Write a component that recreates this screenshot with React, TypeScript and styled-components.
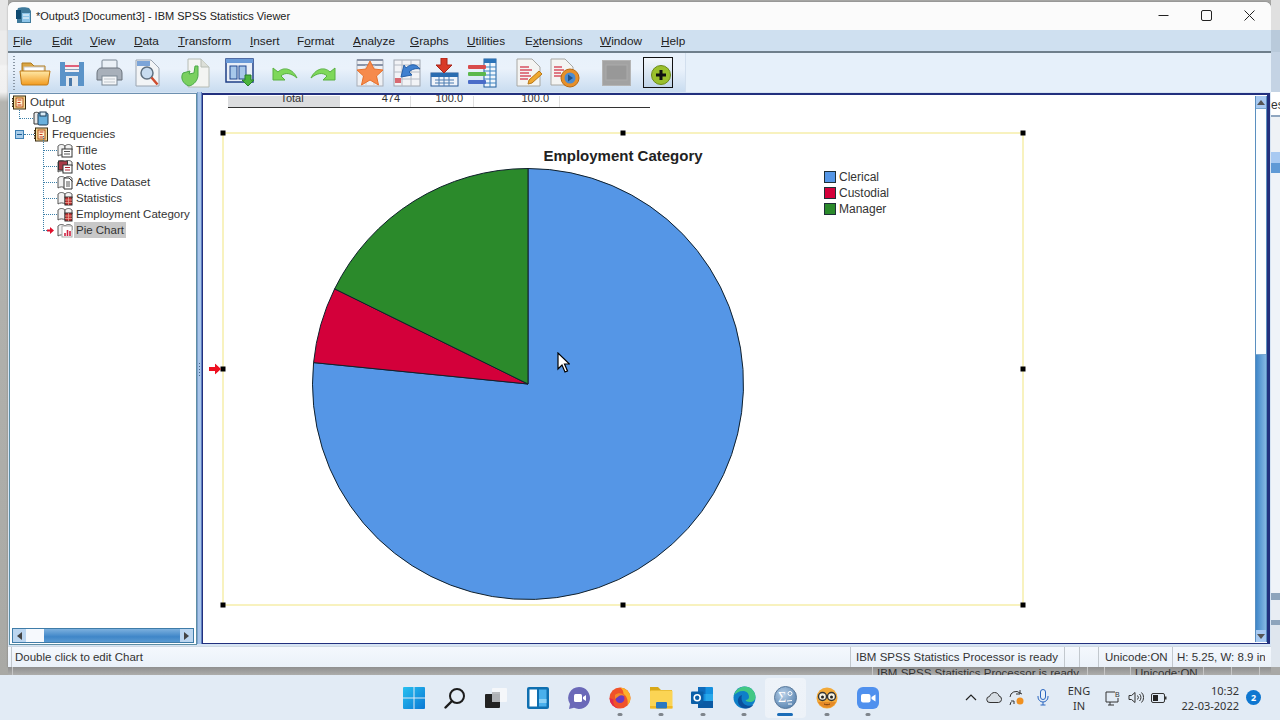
import React from "react";
import styled, { createGlobalStyle } from "styled-components";

const Global = createGlobalStyle`
  html, body { margin: 0; padding: 0; width: 1280px; height: 720px; overflow: hidden; background: #e3ebf4; }
  * { box-sizing: border-box; }
  u { text-decoration-thickness: 1px; text-underline-offset: 1px; }
`;

const Page = styled.div`
  width: 1280px; height: 720px; display: flex; flex-direction: column; overflow: hidden;
  font-family: "Liberation Sans", Arial, sans-serif; font-size: 12px; color: #222;
`;
const Desktop = styled.div`display: flex; height: 675px; flex: none;`;
const LeftEdge = styled.div`
  width: 8px; flex: none;
  background: linear-gradient(180deg, #e6e6e6 0, #e6e6e6 30px, #ececec 31px, #ececec 64px, #f3f3f3 66px, #f0f0f0 92px, #b4b4b0 102px, #a9a9a5 100%);
`;
const RightEdge = styled.div`width: 9px; flex: none; display: flex; flex-direction: column; background: #b9bcc0; overflow: hidden;`;
const EdgeBand = styled.div<{ $h: number; $bg: string }>`height: ${p => p.$h}px; flex: none; background: ${p => p.$bg}; font-size: 12px; line-height: 26px; color: #333; overflow: hidden;`;
const Center = styled.div`flex: 1; display: flex; flex-direction: column; min-width: 0; background: #a8a8a6;`;
const Window = styled.div`
  margin-top: 2px; height: 665px; flex: none; display: flex; flex-direction: column;
  background: #f4f8fc; border-radius: 6px 6px 0 0; overflow: hidden; box-shadow: 0 0 2px rgba(0,0,0,.35);
`;
const TitleBar = styled.div`height: 28px; flex: none; display: flex; align-items: center; padding: 0 0 1px 7px; background: #fbfbfb;`;
const TitleText = styled.span`margin-left: 4px; flex: 1; font-size: 11px; color: #222; white-space: nowrap;`;
const WinBtn = styled.div`width: 43px; height: 26px; display: flex; align-items: center; justify-content: center; color: #222; flex: none;`;

const MenuBar = styled.div`height: 21px; flex: none; display: flex; align-items: center; padding-left: 4px; background: #cfe0f0;`;
const MenuItem = styled.span`margin-left: 1px; color: #222; font-size: 11.8px; white-space: nowrap;`;
const MenuCell = styled.div<{ $w: number }>`width: ${p => p.$w}px; flex: none;`;
const Divider = styled.div`height: 2px; flex: none; background: #6f7f8b;`;
const Toolbar = styled.div`height: 39px; flex: none; display: flex; align-items: center; background: linear-gradient(180deg, #e8f1fb, #eaf2fb 40%, #c9dcf0);`;
const Grip = styled.div`width: 2px; height: 34px; margin-left: 5px; flex: none; background: repeating-linear-gradient(180deg, #8b98a6 0 1px, transparent 1px 3px);`;
const ToolGroup = styled.div<{ $ml: number }>`display: flex; margin-left: ${p => p.$ml}px; flex: none;`;
const ToolCell = styled.div<{ $w?: number }>`width: ${p => p.$w ?? 37.6}px; height: 32px; display: flex; align-items: center; justify-content: center; flex: none;`;
const ToolTail = styled.div`margin-left: 7px; flex: 1; align-self: stretch; background: #e6f0fa; border-left: 1px solid #d2dfee;`;

const Main = styled.div`flex: 1; display: flex; min-height: 0; background: #d6e4f3;`;
const TreePanel = styled.div`
  width: 188px; margin: 1px 0 1px 1px; flex: none; display: flex; flex-direction: column; background: #fff;
  border: 1px solid #5d8ea4; border-top-color: #6d90b0;
`;
const TreeBody = styled.div`flex: 1; overflow: hidden;`;
const Row = styled.div<{ $pad: number }>`height: 16px; display: flex; align-items: center; padding-left: ${p => p.$pad}px; position: relative;`;
const Label = styled.span<{ $sel?: boolean }>`margin-left: 1px; padding: 0 2px; font-size: 11.5px; line-height: 16px; white-space: nowrap; color: #333; background: ${p => p.$sel ? "#c8c8c8" : "transparent"};`;
const GlyphBox = styled.span`display: flex; flex: none;`;
const RowArrow = styled.span`display: flex; flex: none; margin-right: 3px;`;
const Conn = styled.span<{ $w: number; $up: number }>`
  width: ${p => p.$w}px; height: 0; flex: none; border-top: 1px dotted #3a7fa8; position: relative;
  &::before { content: ""; position: absolute; left: 0; bottom: 0; height: ${p => p.$up}px; border-left: 1px dotted #3a7fa8; }
`;
const Expander = styled.span`
  width: 9px; height: 9px; flex: none; background: #a8cdea; border: 1px solid #3c7fb4; position: relative;
  &::after { content: ""; position: absolute; left: 1px; right: 1px; top: 3px; height: 1px; background: #1c5c94; }
`;
const HScroll = styled.div`
  height: 15px; margin: 0 2px 1px 2px; flex: none; display: flex; align-items: center; border: 1px solid #3f7ca8;
  background: linear-gradient(180deg, #7cb0de, #3f86c8 60%, #5a9ad2);
`;
const ScrollBtn = styled.div`width: 13px; height: 13px; flex: none; display: flex; align-items: center; justify-content: center; background: #bcd6f0;`;
const HThumb = styled.div`width: 18px; height: 13px; flex: none; background: #f6f9fd;`;
const Spacer = styled.div`flex: 1;`;
const Splitter = styled.div`
  width: 5px; flex: none; background: #a9c6ea; margin-bottom: 2px; border-left: 1px solid #7ea0cc; border-right: 1px solid #5f7fc0; position: relative;
  &::after { content: ""; position: absolute; left: 1px; top: 271px; height: 14px; width: 1px; background: repeating-linear-gradient(180deg, #46688c 0 1px, transparent 1px 3px); }
`;
const ContentPane = styled.div`
  flex: 1; min-width: 0; margin: 1px 1px 2px 0; display: flex; background: #fff; border: 2px solid #22307e; border-width: 2px 3px 1px 1px;
`;
const Canvas = styled.div`flex: 1; position: relative; overflow: hidden; padding: 1px 0 0 19px; background: #fff;`;
const TableRow = styled.div`width: 422px; height: 12px; margin-left: 6px; display: grid; grid-template-columns: 112px 71px 63px 86px 90px; border-bottom: 1px solid #333;`;
const TableCell = styled.div<{ $head?: boolean; $end?: boolean }>`
  font-size: 11px; line-height: 5px; height: 11px; color: #333; padding-right: ${p => p.$head ? 0 : 10}px; padding-left: ${p => p.$head ? 17 : 0}px;
  text-align: ${p => p.$head ? "center" : "right"}; background: ${p => p.$head ? "#dcdddf" : "transparent"};
  border-right: 1px solid ${p => p.$head || p.$end ? "transparent" : "#e0e0e0"};
`;
const ChartFrame = styled.div`
  width: 802px; height: 474px; margin-top: 24px; position: relative; border: 2px solid #f8f2bf;
`;
const ChartTitle = styled.div`height: 18px; margin-top: 13px; text-align: center; font-size: 15px; font-weight: 700; line-height: 18px; color: #222;`;
const ChartBody = styled.div`display: flex; margin: 3px 0 0 88px; align-items: flex-start;`;
const Legend = styled.div`margin: 1px 0 0 79px; display: flex; flex-direction: column;`;
const LegendItem = styled.div`height: 16px; display: flex; align-items: center; color: #333; font-size: 12px;`;
const Swatch = styled.span<{ $c: string }>`width: 12px; height: 12px; margin-right: 3px; flex: none; background: ${p => p.$c}; border: 1px solid #1e3038;`;
const Handle = styled.span<{ $x: number; $y: number }>`
  position: absolute; width: 5px; height: 5px; background: #000; left: ${p => p.$x}%; top: ${p => p.$y}%;
  transform: translate(calc(-50% + ${p => p.$x / 50 - 1}px), calc(-50% + ${p => p.$y / 50 - 1}px));
`;
const Marker = styled.span`position: absolute; left: -15px; top: 50%; transform: translateY(-50%); display: flex;`;
const Pointer = styled.span`position: absolute; left: 333px; top: 218px; display: flex;`;
const VScroll = styled.div`width: 12px; flex: none; display: flex; flex-direction: column; margin: 1px 0 1px 0; border: 1px solid #5a8fc0; border-width: 0 1px; background: linear-gradient(90deg, #3f86c8, #86b8e4);`;
const VThumb = styled.div`height: 247px; flex: none; background: #fbfdff; border-top: 1px solid #7aa8d0; border-bottom: 1px solid #7aa8d0;`;
const VBtn = styled.div`height: 12px; flex: none; display: flex; align-items: center; justify-content: center; background: #a8caf2;`;

const StatusBar = styled.div`height: 21px; flex: none; display: flex; align-items: center; padding: 0 6px 0 3px; background: linear-gradient(180deg, #f4f8fd, #eaf1f9); border-top: 1px solid #cfd9e4;`;
const StatusCell = styled.div<{ $w: number; $grow?: boolean; $pl?: number }>`
  height: 20px; font-size: 11.5px; line-height: 20px; padding-left: ${p => p.$pl ?? 3}px; color: #333; white-space: nowrap; overflow: hidden;
  flex: ${p => p.$grow ? "1" : "none"}; width: ${p => p.$w}px; border-left: 1px solid #c2c8ce;
`;
const GhostStatus = styled.div`flex: 1; display: flex; overflow: hidden; background: linear-gradient(180deg, #8f8f8f, #adadab); padding-left: 4px;`;
const GhostCell = styled.div<{ $w: number; $grow?: boolean }>`
  color: #333; font-size: 11.5px; line-height: 11px; padding: 1px 0 0 4px; white-space: nowrap; overflow: hidden; width: ${p => p.$w}px; flex: ${p => p.$grow ? "1" : "none"}; border-left: 1px solid #c7c7c7;
`;

const Taskbar = styled.div`height: 45px; flex: none; position: relative; display: flex; align-items: center; background: #e2ebf5; padding-left: 393px;`;
const TaskCell = styled.div<{ $active?: boolean }>`
  width: 41.3px; height: 40px; flex: none; display: flex; align-items: center; justify-content: center; position: relative; border-radius: 4px;
  background: ${p => p.$active ? "linear-gradient(#eef3f9, #edf2f8)" : "transparent"};
`;
const RunDot = styled.span<{ $active?: boolean }>`
  position: absolute; left: 50%; bottom: 2px; transform: translateX(-50%); height: 3px; border-radius: 2px;
  width: ${p => p.$active ? 16 : 5}px; background: ${p => p.$active ? "#1a6cb8" : "#7f858c"};
`;
const Tray = styled.div`margin-left: auto; display: flex; align-items: center; height: 100%; padding-right: 41px; color: #222;`;
const TrayCell = styled.div<{ $w: number }>`width: ${p => p.$w}px; flex: none; display: flex; align-items: center; justify-content: center;`;
const LangBox = styled.div`width: 44px; flex: none; text-align: center; font-family: "Noto Sans", sans-serif; font-size: 11px; line-height: 15px; color: #333;`;
const Clock = styled.div`width: 64px; margin-left: 4px; flex: none; text-align: right; font-family: "Noto Sans", sans-serif; font-size: 11px; line-height: 15px; color: #333;`;
const Badge = styled.div`position: absolute; right: 19px; top: 15px; width: 15px; height: 15px; border-radius: 50%; background: #0f77d0; color: #fff; font-family: "Noto Sans", sans-serif; font-size: 9px; font-weight: 700; line-height: 15px; text-align: center;`;

/* ---------- tree icons ---------- */
const TreeGlyph: React.FC<{ kind: string }> = ({ kind }) => {
  if (kind === "frame") return (
    <GlyphBox><svg width="15" height="15" viewBox="0 0 15 15"><rect x="1.5" y="1" width="12" height="13" fill="#f3dc9a" stroke="#3a2a10"/><rect x="4" y="3" width="7" height="9" fill="#fff3d0" stroke="#b04a10"/><path d="M5.5 5h4M5.5 7.5h3M5.5 10h4" stroke="#c8301a" strokeWidth="1.2"/><path d="M0.5 3v9" stroke="#3a2a10" strokeDasharray="1.5 1"/></svg></GlyphBox>
  );
  if (kind === "log") return (
    <GlyphBox><svg width="16" height="15" viewBox="0 0 16 15"><path d="M1 2c2-1 3-1 5 0v11H1z" fill="#e8e8e8" stroke="#333"/><rect x="5" y="2" width="10" height="12" rx="1.5" fill="#6ab0dc" stroke="#1d3a55"/><rect x="7" y="1" width="6" height="4" fill="#d8ecf8" stroke="#1d3a55"/></svg></GlyphBox>
  );
  const front =
    kind === "title" ? <g><rect x="5" y="6" width="10" height="8" fill="#fff" stroke="#333"/><path d="M7 8.5h6M7 11h6" stroke="#555"/></g>
    : kind === "notes" ? <g><rect x="1.5" y="2" width="9" height="9" fill="#a83a46" stroke="#333"/><rect x="6" y="6" width="9" height="8" fill="#fff" stroke="#333"/><path d="M8 8.5h5M8 11h5" stroke="#b02030"/></g>
    : kind === "text" ? <g><path d="M7 3h5l3 3v8H7z" fill="#fff" stroke="#333"/><path d="M9 7h4M9 9h4M9 11h4" stroke="#555"/></g>
    : kind === "table" ? <g><rect x="8" y="6" width="7" height="8" fill="#c23030" stroke="#333"/><path d="M8 9h7M8 11.5h7M11.5 6v8" stroke="#f0b0a0" strokeWidth=".7"/></g>
    : <g><rect x="5" y="3" width="10" height="11" fill="#fff" stroke="#aaa"/><path d="M8 13v-3M10.5 13V7M13 13v-5" stroke="#d02040" strokeWidth="1.6"/></g>;
  return (
    <GlyphBox><svg width="16" height="15" viewBox="0 0 16 15"><path d="M1 3c2-2 5-2 7 0v10c-2-1.500-5-1.500-7 0z" fill="#f2f2f2" stroke="#555"/><path d="M8 3c2-2 5-2 7 0v4H8z" fill="#f2f2f2" stroke="#555"/>{front}</svg></GlyphBox>
  );
};

/* ---------- toolbar icons ---------- */
const I = {
  Folder: () => (<svg width="32" height="27" viewBox="0 0 32 27"><defs><linearGradient id="fo" x1="0" y1="0" x2="0" y2="1"><stop offset="0" stopColor="#ffe9a8"/><stop offset="1" stopColor="#f29a1e"/></linearGradient></defs><path d="M3 4h9l3 3h11v5H3z" fill="#d9a544" stroke="#b07a1c"/><rect x="5" y="8" width="20" height="6" fill="#fff" stroke="#ccc"/><path d="M1 12h30l-2 13a1.500 1.500 0 0 1-1.500 1H4a1.500 1.500 0 0 1-1.500-1z" fill="url(#fo)" stroke="#c27a14"/></svg>),
  Save: () => (<svg width="26" height="26" viewBox="0 0 26 26"><path d="M1 2h24v24H1z" fill="#5b93c8"/><rect x="6" y="2" width="14" height="10" fill="#f0f0f4"/><path d="M6 6h14" stroke="#e0607a" strokeWidth="2"/><path d="M6 9.500h14" stroke="#8a9db5"/><rect x="7" y="16" width="12" height="10" fill="#e2e8ee"/><rect x="10" y="18" width="3" height="8" fill="#4a78a8"/></svg>),
  Print: () => (<svg width="27" height="27" viewBox="0 0 27 27"><rect x="6" y="1" width="15" height="9" rx="1" fill="#eaf0f6" stroke="#7a8794"/><path d="M1 14c0-3 2-5 4-5h17c2 0 4 2 4 5v7H1z" fill="#a8b0ba" stroke="#6a737d"/><rect x="6" y="17" width="15" height="9" fill="#f4f6f8" stroke="#7a8794"/><path d="M8 20h11M8 23h11" stroke="#c0c6cc"/></svg>),
  Preview: () => (<svg width="26" height="28" viewBox="0 0 26 28"><path d="M1 1h15l8 8v18H1z" fill="#f2f4f6" stroke="#9aa4b0"/><rect x="2" y="2" width="13" height="5" fill="#7ba4d8"/><circle cx="12" cy="14" r="6" fill="#c8dcf0" stroke="#5f7080" strokeWidth="1.500"/><path d="M16.500 18.500l6 7" stroke="#cf4c2e" strokeWidth="2.500"/></svg>),
  Export: () => (<svg width="31" height="30" viewBox="0 0 31 30"><path d="M9 1h13l8 8v20H9z" fill="#f3f4f2" stroke="#b6bcb4"/><path d="M22 1v8h8" fill="#dcdfd8" stroke="#b6bcb4"/><path d="M4 15c-3 5 0 11 6 13 5-1 9-6 9-11V8h-3l-1 7-5 1 1-3z" fill="#7ad060" stroke="#4aa848"/></svg>),
  Designate: () => (<svg width="30" height="29" viewBox="0 0 30 29"><rect x="1" y="1" width="27" height="23" fill="#e9eff7" stroke="#1f3f86" strokeWidth="1.500"/><rect x="1" y="1" width="27" height="4" fill="#6a9ad8"/><rect x="5" y="8" width="7" height="13" fill="#a8c8ea" stroke="#21468f"/><rect x="14" y="8" width="7" height="13" fill="#a8c8ea" stroke="#21468f"/><path d="M20 17h6v5h3l-6 6-6-6h3z" fill="#4cb43c" stroke="#27802a"/></svg>),
  Undo: () => (<svg width="26" height="16" viewBox="0 0 26 16"><path d="M1 3v12h12l-4-4c4-4 10-3 16 2C21 4 12 1 6 7z" fill="#7ed85a" stroke="#58b040" strokeLinejoin="round"/></svg>),
  Redo: () => (<svg width="26" height="16" viewBox="0 0 26 16"><path d="M25 3v12H13l4-4c-4-4-10-3-16 2C5 4 14 1 20 7z" fill="#7ed85a" stroke="#58b040" strokeLinejoin="round"/></svg>),
  Star: () => (<svg width="28" height="28" viewBox="0 0 28 28"><rect x="1" y="1" width="26" height="26" fill="#eef0f4" stroke="#a8aeb8"/><path d="M1 6h26M1 1h26" stroke="#8a94a8" strokeWidth="2"/><path d="M7 12h14M7 18h14M10 6v20M18 6v20" stroke="#c9ced6"/><path d="M14 2l4 8 9 1-6.500 6 2 9-8.500-5-8.500 5 2-9L1 11l9-1z" fill="#f68a4c" stroke="#e8702a"/></svg>),
  GoTo: () => (<svg width="29" height="28" viewBox="0 0 29 28"><rect x="1" y="1" width="26" height="26" fill="#f2f3f6" stroke="#a0a6b0"/><path d="M1 6h26M1 13h26M1 20h26M9 1v26M18 1v26" stroke="#b4bac4"/><rect x="2" y="19" width="6" height="5" fill="#d86870"/><path d="M27 10c-4-6-10-5-14-1l-2-3-3 12 11-2-3-3c3-3 7-4 11-3z" fill="#3f80d0" stroke="#2660a8"/></svg>),
  Insert: () => (<svg width="29" height="29" viewBox="0 0 29 29"><rect x="1" y="15" width="27" height="13" fill="#f0f4fa" stroke="#2a5a98"/><rect x="1" y="15" width="27" height="4" fill="#2a6cb0"/><path d="M5 22h19M5 25h19M9 19v9M14 19v9M19 19v9" stroke="#4a7ab0"/><path d="M11 0h6v7h5l-8 8-8-8h5z" fill="#d83a28" stroke="#a82418"/></svg>),
  Table: () => (<svg width="30" height="30" viewBox="0 0 30 30"><rect x="17" y="1" width="12" height="28" fill="#f0f6fc" stroke="#1f5c9c"/><rect x="17" y="1" width="12" height="4" fill="#2a72b8"/><path d="M17 9h12M17 13h12M17 17h12M17 21h12M17 25h12M23 5v24" stroke="#3a82c0"/><rect x="1" y="7" width="18" height="4" rx="1" fill="#d84c4c"/><rect x="1" y="14" width="18" height="4" rx="1" fill="#5cb84c"/><rect x="1" y="22" width="18" height="4" rx="1" fill="#4a6cc8"/></svg>),
  Script: () => (<svg width="27" height="29" viewBox="0 0 27 29"><path d="M1 1h15l8 8v19H1z" fill="#f4f4f2" stroke="#a8a8a4"/><path d="M4 9h9M4 12h12M4 15h9M4 18h11M4 21h8" stroke="#d85060" strokeWidth="1.400"/><path d="M13 22l10-9 3 3-10 9-4 1z" fill="#f0a830" stroke="#b87818"/></svg>),
  Script2: () => (<svg width="30" height="30" viewBox="0 0 30 30"><path d="M1 1h14l8 8v18H1z" fill="#f4f4f2" stroke="#a8a8a4"/><path d="M4 9h8M4 12h10M4 15h7M4 18h8" stroke="#d85060" strokeWidth="1.400"/><circle cx="20" cy="20" r="9" fill="#e8902a" stroke="#b86a14"/><circle cx="20" cy="20" r="5.500" fill="#4c8cd0"/><path d="M18 16.500l5 3.500-5 3.500z" fill="#1f4f88"/></svg>),
  Gray: () => (<svg width="29" height="26" viewBox="0 0 29 26"><rect x="0.500" y="0.500" width="28" height="25" fill="#a2a2a2" stroke="#b4b4b4"/><rect x="4" y="5" width="21" height="15" fill="#989898" stroke="#aaa"/></svg>),
  Plus: () => (<svg width="30" height="31" viewBox="0 0 30 31"><defs><linearGradient id="pb" x1="0" y1="0" x2="0" y2="1"><stop offset="0" stopColor="#f4f8fc"/><stop offset="1" stopColor="#c0d4e8"/></linearGradient></defs><rect x="0.500" y="0.500" width="29" height="30" fill="url(#pb)" stroke="#111"/><circle cx="18" cy="18" r="9.500" fill="#9ac02c" stroke="#6c8a18"/><path d="M18 13v10M13 18h10" stroke="#111" strokeWidth="3"/></svg>),
};

/* ---------- taskbar icons ---------- */
const T = {
  Win: () => (<svg width="22" height="22" viewBox="0 0 22 22"><defs><linearGradient id="wg" x1="0" y1="0" x2="1" y2="1"><stop offset="0" stopColor="#28c0f0"/><stop offset="1" stopColor="#0a78d4"/></linearGradient></defs><path d="M0 1a1 1 0 0 1 1-1h9.500v10.500H0zM11.500 0H21a1 1 0 0 1 1 1v9.500H11.500zM0 11.500h10.500V22H1a1 1 0 0 1-1-1zM11.500 11.500H22V21a1 1 0 0 1-1 1h-9.500z" fill="url(#wg)"/></svg>),
  Search: () => (<svg width="22" height="22" viewBox="0 0 22 22"><circle cx="13" cy="9" r="7" fill="none" stroke="#1c1c1c" strokeWidth="2"/><path d="M8 14l-6.500 6.500" stroke="#1c1c1c" strokeWidth="2.400" strokeLinecap="round"/></svg>),
  Task: () => (<svg width="22" height="22" viewBox="0 0 22 22"><rect x="7" y="1" width="15" height="14" rx="1" fill="#f5f7fa"/><rect x="7" y="5" width="8" height="11" fill="#b9bcc0"/><rect x="0" y="7" width="15" height="14" rx="1" fill="#222"/><rect x="7" y="7" width="8" height="8" fill="#aeb1b5"/></svg>),
  Widgets: () => (<svg width="22" height="22" viewBox="0 0 22 22"><rect x="0" y="0" width="22" height="22" rx="2" fill="#0f6fb0"/><rect x="2.500" y="2.500" width="7.500" height="17" fill="#fff"/><rect x="12" y="2.500" width="7.500" height="17" fill="#4ab0ec"/><rect x="12" y="12" width="7.500" height="4" fill="#8cd0f4"/></svg>),
  Chat: () => (<svg width="22" height="22" viewBox="0 0 22 22"><path d="M11 0a11 11 0 1 1-5 20.800L1 22l1-5A11 11 0 0 1 11 0z" fill="#6b69b8"/><rect x="6" y="7" width="8" height="8" rx="1.500" fill="#fff"/><path d="M15 10l3-2v6l-3-2z" fill="#fff"/></svg>),
  Firefox: () => (<svg width="22" height="23" viewBox="0 0 22 23"><circle cx="11" cy="12" r="10.500" fill="#f0522a"/><path d="M11 1.500A10.500 10.500 0 0 1 21.500 12c0 3-1 5-3 7 1-5-1-9-4-11 0-3-1-5-3.500-6.500z" fill="#fbb12a"/><path d="M.5 12a10.500 10.500 0 0 0 10 10.500c-5-1-7-5-6-9z" fill="#e32a4a"/><circle cx="11" cy="12.500" r="4.500" fill="#6a3ac0"/><path d="M6 9c3-3 8-2 10 1-3-1-5-1-6 0l-4 3z" fill="#f48a2a"/></svg>),
  Folder: () => (<svg width="24" height="22" viewBox="0 0 24 22"><path d="M1 0h8l3 3h11v3H1z" fill="#d8a818"/><rect x="1" y="3.500" width="22.500" height="18" rx="1" fill="#fbd454"/><rect x="1" y="19" width="22.500" height="2.500" fill="#f0b824"/><rect x="7" y="15" width="11" height="6.500" rx="1" fill="#2a78c0"/></svg>),
  Outlook: () => (<svg width="23" height="22" viewBox="0 0 23 22"><rect x="7" y="0" width="15" height="20" rx="1" fill="#1490df"/><rect x="7" y="0" width="7.500" height="7" fill="#0f6cbd"/><rect x="14.500" y="7" width="7.500" height="7" fill="#28a8ea"/><rect x="7" y="14" width="15" height="7" fill="#0a5aa4"/><rect x="0" y="4.500" width="12.500" height="12.500" rx="1" fill="#0a5fa8"/><circle cx="6.200" cy="10.700" r="3" fill="none" stroke="#fff" strokeWidth="1.600"/></svg>),
  Edge: () => (<svg width="23" height="23" viewBox="0 0 23 23"><circle cx="11.500" cy="11.500" r="11" fill="#0e7fc8"/><path d="M1 10C2 4 7 .5 11.500.5 18 .5 22.500 5.500 22.500 11c0 3-2.500 5-5.500 5-3 0-4-1-4.500-2 2 0 3.500-1 3.500-3 0-4-3-6-6-6-4 0-7.500 2-9.500 5z" fill="#42c884"/><path d="M9 9c-3 1-4.500 4-4 7 .7 3.500 3.500 6.500 8 6.500 3 0 6-1.500 7.500-4-3 2-7 1.500-9.500-.5C8.500 15.500 8 12 9 9z" fill="#0a4f9c"/></svg>),
  Spss: () => (<svg width="23" height="23" viewBox="0 0 23 23"><defs><radialGradient id="sp" cx=".4" cy=".35" r=".8"><stop offset="0" stopColor="#b8d0e8"/><stop offset="1" stopColor="#4a78a8"/></radialGradient></defs><circle cx="11.500" cy="11.500" r="11" fill="url(#sp)" stroke="#5a7a9c"/><text x="4" y="16" fontFamily="Liberation Serif, serif" fontSize="14" fill="#fff">Σ</text><circle cx="16" cy="7.500" r="2" fill="none" stroke="#fff"/><path d="M13 15l5-.5M14 18h4" stroke="#fff"/></svg>),
  Emoji: () => (<svg width="22" height="22" viewBox="0 0 22 22"><circle cx="11" cy="11" r="10.500" fill="#f2a938"/><path d="M2 15a10 10 0 0 0 18 0z" fill="#e58a28"/><circle cx="6.500" cy="9.500" r="4" fill="#f4f0e0" stroke="#333" strokeWidth="1.400"/><circle cx="15.500" cy="9.500" r="4" fill="#f4f0e0" stroke="#333" strokeWidth="1.400"/><circle cx="6.500" cy="10" r="1.500" fill="#222"/><circle cx="15.500" cy="10" r="1.500" fill="#222"/><path d="M8 17c2 1 4 1 6 0" stroke="#7a3f10" fill="none"/></svg>),
  Zoom: () => (<svg width="22" height="22" viewBox="0 0 22 22"><rect width="22" height="22" rx="6" fill="#4f90ee"/><rect x="4" y="7" width="9.500" height="8.500" rx="2" fill="#fff"/><path d="M14.500 10l4-2.500v7l-4-2.500z" fill="#fff"/></svg>),
};

const Pie: React.FC = () => {
  const cx = 216, cy = 216, r = 215.5;
  const pt = (deg: number) => {
    const a = (deg * Math.PI) / 180;
    return `${cx + r * Math.sin(a)} ${cy - r * Math.cos(a)}`;
  };
  const a1 = 275.7, a2 = 296.2;
  return (
    <svg width="433" height="433" viewBox="0 0 433 433">
      <g stroke="#10202c" strokeWidth="1">
        <path d={`M${cx} ${cy}L${cx} ${cy - r}A${r} ${r} 0 1 1 ${pt(a1)}Z`} fill="#5596e6" />
        <path d={`M${cx} ${cy}L${pt(a1)}A${r} ${r} 0 0 1 ${pt(a2)}Z`} fill="#d3003a" />
        <path d={`M${cx} ${cy}L${pt(a2)}A${r} ${r} 0 0 1 ${cx} ${cy - r}Z`} fill="#2b8a2b" />
      </g>
    </svg>
  );
};

const menus: [string, string, string, number][] = [
  ["", "F", "ile", 39], ["", "E", "dit", 38], ["", "V", "iew", 44], ["", "D", "ata", 44], ["", "T", "ransform", 72],
  ["", "I", "nsert", 47], ["F", "o", "rmat", 56], ["", "A", "nalyze", 57], ["", "G", "raphs", 57], ["", "U", "tilities", 58],
  ["E", "x", "tensions", 75], ["", "W", "indow", 61], ["", "H", "elp", 40],
];
const tree: [string, string][] = [["title", "Title"], ["notes", "Notes"], ["text", "Active Dataset"], ["table", "Statistics"], ["table", "Employment Category"]];
const handles: [number, number][] = [[0, 0], [50, 0], [100, 0], [0, 50], [100, 50], [0, 100], [50, 100], [100, 100]];
const taskIcons = [T.Win, T.Search, T.Task, T.Widgets, T.Chat, T.Firefox, T.Folder, T.Outlook, T.Edge, T.Spss, T.Emoji, T.Zoom];
const running = [5, 6, 7, 8, 9, 10, 11];
const edgeBands: [number, string, string?][] = [
  [30, "#e0e0e0"], [22, "#b9cadb"], [40, "#c4d3e4"], [23, "#fff", "es"], [2, "#8fa6c0"], [35, "#eef2f6"],
  [11, "#a8caf2"], [10, "#5f9ad6"], [420, "#eff3f8"], [7, "#8da4bc"], [20, "#e8edf3"], [5, "#8da4bc"], [42, "#dfe6ee"], [8, "#a8a8a6"],
];

export default function App() {
  return (
    <Page>
      <Global />
      <Desktop>
        <LeftEdge />
        <Center>
          <Window>
            <TitleBar>
              <svg width="17" height="17" viewBox="0 0 17 17"><path d="M3 1c3-1 8-1 11 0l2 3v12H2V4z" fill="#3f7a9c"/><rect x="7" y="6" width="8" height="9" fill="#8cc4e8"/><rect x="1" y="3" width="5" height="9" fill="#0e4a70"/><path d="M8 8h6M8 11h6" stroke="#fff"/></svg>
              <TitleText>*Output3 [Document3] - IBM SPSS Statistics Viewer</TitleText>
              <WinBtn><svg width="11" height="11" viewBox="0 0 11 11"><path d="M0.500 5.500h10" stroke="#222"/></svg></WinBtn>
              <WinBtn><svg width="11" height="11" viewBox="0 0 11 11"><rect x="0.500" y="0.500" width="10" height="10" rx="1.500" fill="none" stroke="#222"/></svg></WinBtn>
              <WinBtn><svg width="11" height="11" viewBox="0 0 11 11"><path d="M0.500 0.500l10 10M10.500 0.500l-10 10" stroke="#222"/></svg></WinBtn>
            </TitleBar>
            <MenuBar>
              {menus.map(([a, b, c, w]) => (
                <MenuCell key={b + c} $w={w}><MenuItem>{a}<u>{b}</u>{c}</MenuItem></MenuCell>
              ))}
            </MenuBar>
            <Divider />
            <Toolbar>
              <Grip />
              <ToolGroup $ml={1}>
                <ToolCell><I.Folder /></ToolCell><ToolCell><I.Save /></ToolCell><ToolCell><I.Print /></ToolCell><ToolCell><I.Preview /></ToolCell>
              </ToolGroup>
              <ToolGroup $ml={9}><ToolCell><I.Export /></ToolCell></ToolGroup>
              <ToolGroup $ml={8}><ToolCell><I.Designate /></ToolCell></ToolGroup>
              <ToolGroup $ml={8}><ToolCell><I.Undo /></ToolCell><ToolCell><I.Redo /></ToolCell></ToolGroup>
              <ToolGroup $ml={9}>
                <ToolCell><I.Star /></ToolCell><ToolCell><I.GoTo /></ToolCell><ToolCell><I.Insert /></ToolCell><ToolCell><I.Table /></ToolCell>
              </ToolGroup>
              <ToolGroup $ml={10}><ToolCell $w={36}><I.Script /></ToolCell><ToolCell $w={36}><I.Script2 /></ToolCell></ToolGroup>
              <ToolGroup $ml={13}><ToolCell $w={41}><I.Gray /></ToolCell><ToolCell $w={41}><I.Plus /></ToolCell></ToolGroup>
              <ToolTail />
            </Toolbar>
            <Main>
              <TreePanel>
                <TreeBody>
                  <Row $pad={2}><TreeGlyph kind="frame" /><Label>Output</Label></Row>
                  <Row $pad={9}><Conn $w={14} $up={9} /><TreeGlyph kind="log" /><Label>Log</Label></Row>
                  <Row $pad={5}><Expander /><Conn $w={10} $up={0} /><TreeGlyph kind="frame" /><Label>Frequencies</Label></Row>
                  {tree.map(([k, t]) => (
                    <Row key={t} $pad={33}><Conn $w={14} $up={15} /><TreeGlyph kind={k} /><Label>{t}</Label></Row>
                  ))}
                  <Row $pad={33}>
                    <Conn $w={4} $up={15} />
                    <RowArrow><svg width="7" height="7" viewBox="0 0 7 7"><path d="M0 2.500h3V0l4 3.500L3 7V4.500H0z" fill="#e0102c"/></svg></RowArrow>
                    <TreeGlyph kind="pie" />
                    <Label $sel>Pie Chart</Label>
                  </Row>
                </TreeBody>
                <HScroll>
                  <ScrollBtn><svg width="5" height="8" viewBox="0 0 5 8"><path d="M5 0v8L0 4z" fill="#444"/></svg></ScrollBtn>
                  <HThumb />
                  <Spacer />
                  <ScrollBtn><svg width="5" height="8" viewBox="0 0 5 8"><path d="M0 0v8l5-4z" fill="#444"/></svg></ScrollBtn>
                </HScroll>
              </TreePanel>
              <Splitter />
              <ContentPane>
                <Canvas>
                  <TableRow>
                    <TableCell $head>Total</TableCell>
                    <TableCell>474</TableCell>
                    <TableCell>100.0</TableCell>
                    <TableCell>100.0</TableCell>
                    <TableCell $end />
                  </TableRow>
                  <ChartFrame>
                    <ChartTitle>Employment Category</ChartTitle>
                    <ChartBody>
                      <Pie />
                      <Legend>
                        <LegendItem><Swatch $c="#5596e6" />Clerical</LegendItem>
                        <LegendItem><Swatch $c="#d3003a" />Custodial</LegendItem>
                        <LegendItem><Swatch $c="#2b8a2b" />Manager</LegendItem>
                      </Legend>
                    </ChartBody>
                    {handles.map(([x, y]) => <Handle key={`${x}-${y}`} $x={x} $y={y} />)}
                    <Marker><svg width="12" height="11" viewBox="0 0 12 11"><path d="M0 3.500h6V0l6 5.500L6 11V7.500H0z" fill="#ee1020"/></svg></Marker>
                    <Pointer><svg width="13" height="21" viewBox="0 0 13 21"><path d="M1 1v16l4-4 3 7 2.500-1-3-7h5z" fill="#fff" stroke="#000" strokeWidth="1.200"/></svg></Pointer>
                  </ChartFrame>
                </Canvas>
                <VScroll>
                  <VBtn><svg width="8" height="5" viewBox="0 0 8 5"><path d="M0 5h8L4 0z" fill="#555"/></svg></VBtn>
                  <VThumb />
                  <Spacer />
                  <VBtn><svg width="8" height="5" viewBox="0 0 8 5"><path d="M0 0h8L4 5z" fill="#555"/></svg></VBtn>
                </VScroll>
              </ContentPane>
            </Main>
            <StatusBar>
              <StatusCell $w={0} $grow>Double click to edit Chart</StatusCell>
              <StatusCell $w={214} $pl={5}>IBM SPSS Statistics Processor is ready</StatusCell>
              <StatusCell $w={15} />
              <StatusCell $w={19} />
              <StatusCell $w={74} $pl={6}>Unicode:ON</StatusCell>
              <StatusCell $w={93} $pl={4}>H: 5.25, W: 8.9 in</StatusCell>
            </StatusBar>
          </Window>
          <GhostStatus>
            <GhostCell $w={0} $grow />
            <GhostCell $w={215}>IBM SPSS Statistics Processor is ready</GhostCell>
            <GhostCell $w={17} />
            <GhostCell $w={26} />
            <GhostCell $w={73}>Unicode:ON</GhostCell>
            <GhostCell $w={28} />
            <GhostCell $w={28} />
            <GhostCell $w={12} />
          </GhostStatus>
        </Center>
        <RightEdge>
          {edgeBands.map(([h, bg, text], i) => <EdgeBand key={i} $h={h} $bg={bg}>{text}</EdgeBand>)}
        </RightEdge>
      </Desktop>
      <Taskbar>
        {taskIcons.map((Icon, i) => (
          <TaskCell key={i} $active={i === 9}>
            <Icon />
            {running.includes(i) && <RunDot $active={i === 9} />}
          </TaskCell>
        ))}
        <Tray>
          <TrayCell $w={23}><svg width="12" height="7" viewBox="0 0 12 7"><path d="M1 6l5-5 5 5" fill="none" stroke="#222" strokeWidth="1.200"/></svg></TrayCell>
          <TrayCell $w={23}><svg width="16" height="11" viewBox="0 0 16 11"><path d="M4 10.500a3 3 0 0 1-.5-6C4.500 2 6.500.5 8.500.5c2.500 0 4 1.500 4.500 3.500a3.300 3.300 0 0 1-.5 6.500z" fill="#d6dde4" stroke="#333"/></svg></TrayCell>
          <TrayCell $w={23}><svg width="17" height="17" viewBox="0 0 17 17"><path d="M2 8a6 6 0 0 1 10-4l2 1M12 1v4H8M3 13l-1 3M3 12h3v3" fill="none" stroke="#333"/><circle cx="12" cy="12" r="3.500" fill="#f09020"/></svg></TrayCell>
          <TrayCell $w={29}><svg width="12" height="17" viewBox="0 0 12 17"><rect x="3.500" y="0.500" width="5" height="10" rx="2.500" fill="#e8f0f8" stroke="#2a66c0"/><path d="M1 7v1a5 5 0 0 0 10 0V7M6 13v3M3.500 16h5" fill="none" stroke="#2a66c0"/></svg></TrayCell>
          <LangBox>ENG<br />IN</LangBox>
          <TrayCell $w={24}><svg width="16" height="16" viewBox="0 0 16 16"><path d="M10 2H1v10h12V8M5 12v3M3 15h6" fill="none" stroke="#333"/><text x="10" y="7" fontSize="7" fontFamily="Liberation Sans, sans-serif" fill="#333">B</text></svg></TrayCell>
          <TrayCell $w={22}><svg width="16" height="13" viewBox="0 0 16 13"><path d="M1 4.500h2.500L7 1.500v10L3.500 8.500H1z" fill="none" stroke="#333"/><path d="M9.500 4.500a3 3 0 0 1 0 4M11.500 3a5 5 0 0 1 0 7M13.500 1.500a7 7 0 0 1 0 10" fill="none" stroke="#333"/></svg></TrayCell>
          <TrayCell $w={24}><svg width="16" height="10" viewBox="0 0 16 10"><rect x="0.500" y="0.500" width="13" height="9" rx="1.500" fill="none" stroke="#333"/><rect x="2" y="2" width="5" height="6" fill="#222"/><rect x="14" y="3.500" width="1.500" height="3" fill="#333"/></svg></TrayCell>
          <Clock>10:32<br />22-03-2022</Clock>
        </Tray>
        <Badge>2</Badge>
      </Taskbar>
    </Page>
  );
}
